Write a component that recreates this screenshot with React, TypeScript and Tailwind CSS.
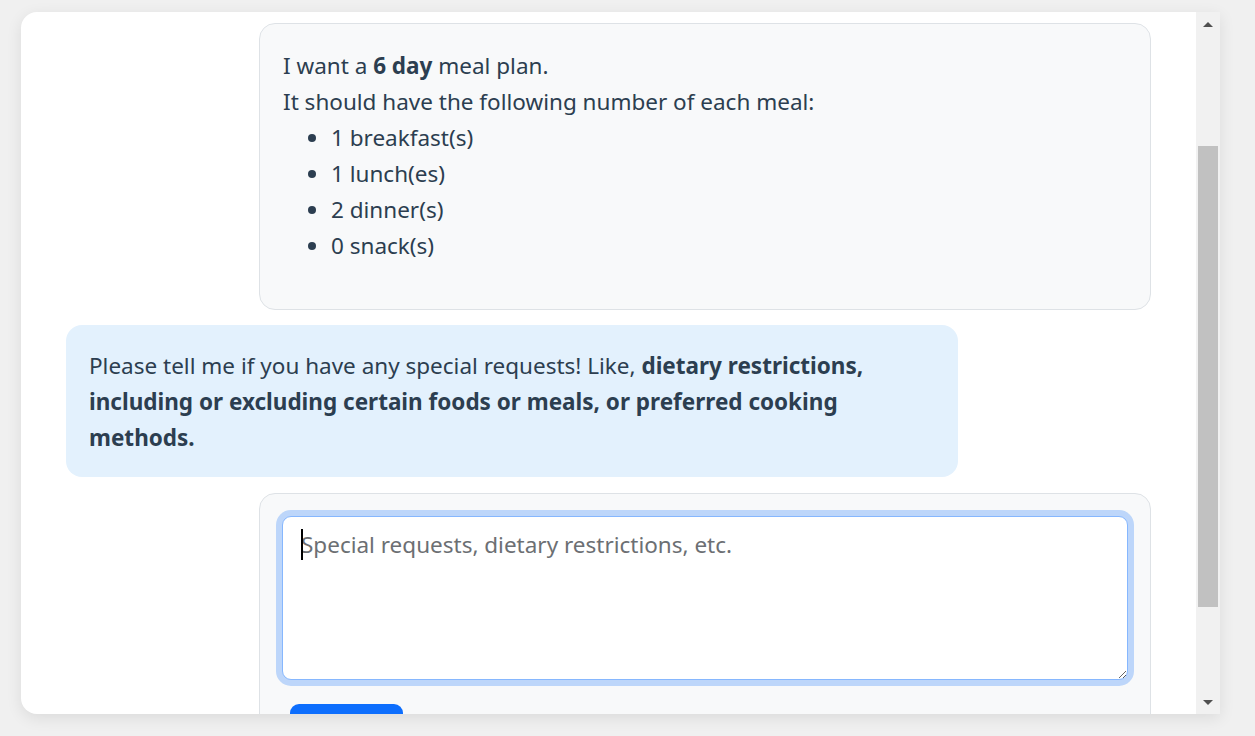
import React from "react";

const font = { fontFamily: '"Segoe UI", "Noto Sans", sans-serif' };

const meals = ["1 breakfast(s)", "1 lunch(es)", "2 dinner(s)", "0 snack(s)"];

const Scrollbar = () => (
  <div className="flex w-6 shrink-0 flex-col bg-[#f1f1f1]">
    <div className="flex h-6 items-center justify-center">
      <div className="h-0 w-0 border-x-[5px] border-b-[5px] border-x-transparent border-b-[#505050]" />
    </div>
    <div className="h-[110px]" />
    <div className="mx-[2px] h-[461px] bg-[#c1c1c1]" />
    <div className="flex-1" />
    <div className="flex h-6 items-center justify-center">
      <div className="h-0 w-0 border-x-[5px] border-t-[5px] border-x-transparent border-t-[#505050]" />
    </div>
  </div>
);

export default function App() {
  return (
    <div className="min-h-screen bg-[#f0f0f0] pl-[21px] pt-3" style={font}>
      <div className="flex h-[702px] w-[1199px] overflow-hidden rounded-l-2xl bg-white shadow-[0_4px_16px_rgba(0,0,0,0.09)]">
        <div className="flex flex-1 flex-col overflow-hidden px-[45px] pt-[11px] text-[22.5px] leading-[36px] text-[#2c3e50]">
          {/* user summary */}
          <div className="ml-auto w-[892px] shrink-0 rounded-2xl border border-[#dee2e6] bg-[#f8f9fa] px-[23px] pb-[45px] pt-[24px]">
            <p>
              I want a <b>6 day</b> meal plan.
            </p>
            <p>It should have the following number of each meal:</p>
            <ul className="list-disc pl-[48px]">
              {meals.map((m) => (
                <li key={m}>{m}</li>
              ))}
            </ul>
          </div>

          {/* assistant prompt */}
          <div className="mt-[15px] w-[892px] shrink-0 rounded-2xl bg-[#e3f1fd] px-[23px] pb-[21px] pt-[23px]">
            Please tell me if you have any special requests! Like,{" "}
            <b>
              dietary restrictions,
              <br />
              including or excluding certain foods or meals, or preferred cooking
              <br />
              methods.
            </b>
          </div>

          {/* request form */}
          <div className="ml-auto mt-4 w-[892px] shrink-0 rounded-2xl border border-[#dee2e6] bg-[#f8f9fa] p-[22px]">
            <div className="relative">
              <textarea
                className="block h-[164px] w-full rounded-[9px] border-[1.5px] border-[#86b7fe] bg-white px-[18px] py-[10px] text-[22.5px] leading-[36px] text-[#212529] shadow-[0_0_0_6px_rgba(13,110,253,0.25)] outline-none placeholder:text-[#6c6f73]"
                placeholder="Special requests, dietary restrictions, etc."
                style={font}
              />
              <div className="absolute left-[19px] top-[13px] h-[31px] w-[2px] bg-black" />
            </div>
            <button
              aria-label="Submit"
              className="ml-2 mt-6 h-[54px] w-[113px] rounded-[9px] bg-[#0d6efd]"
            />
          </div>
        </div>
        <Scrollbar />
      </div>
    </div>
  );
}
